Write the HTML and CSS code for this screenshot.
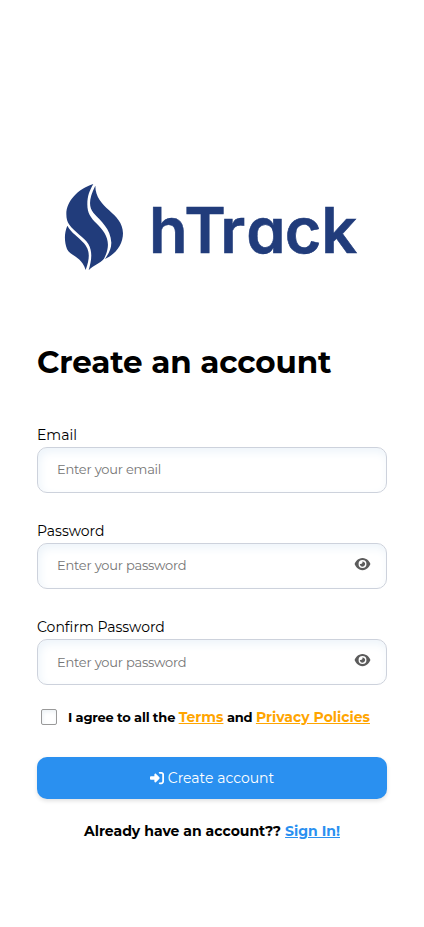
FILE: index.html
```
<!DOCTYPE html>
<html lang="en">
<head>
<meta charset="utf-8">
<meta name="viewport" content="width=device-width, initial-scale=1">
<title>hTrack - Create an account</title>
<link rel="stylesheet" href="styles.css">
</head>
<body>
<main class="page">
  <svg class="logo" viewBox="0 0 350 110" role="img" aria-label="hTrack">
    <g transform="translate(13 0) scale(.33333)">
      <path d="M130 42C83 57 49 94 49 132C49 146 52 155 57 163C74 187 103 203 115 222C129 246 124 274 116 301C130 285 149 281 162 266C187 218 169 190 139 160C122 143 112 130 112 103C112 77 119 61 130 42Z"/>
      <path d="M136 47C117 84 115 110 130 128C153 154 182 175 184 218C184 237 175 252 165 267C198 252 219 223 219 190C219 126 136 117 136 47Z"/>
      <path d="M52 167C42 190 43 216 51 237C62 259 94 258 107 300C124 253 115 237 102 220C84 198 65 191 52 167Z"/>
    </g>
    <text class="wordmark" x="112 147.2 183.2 209.2 247.7 284.3" y="82.6">hTrack</text>
  </svg>
  <h1 class="title">Create an account</h1>
  <form class="form">
    <div class="field">
      <label class="label" for="email">Email</label>
      <div class="control"><input class="input" id="email" type="email" placeholder="Enter your email"></div>
    </div>
    <div class="field">
      <label class="label" for="password">Password</label>
      <div class="control">
        <input class="input" id="password" type="password" placeholder="Enter your password">
        <svg class="eye" viewBox="0 0 576 512"><path d="M288 32c-81 0-146 37-193 80C48 156 17 208 2 244c-3 8-3 16 0 24 15 36 46 88 93 132 47 43 112 80 193 80s146-37 193-80c47-44 78-96 93-132 3-8 3-16 0-24-15-36-46-88-93-132-47-43-112-80-193-80zM144 256a144 144 0 1 1 288 0 144 144 0 1 1-288 0zm144-64c0 35-29 64-64 64-7 0-14-1-20-3-6-2-13 2-12 8 0 7 1 14 3 21 14 51 67 81 118 68s81-67 68-118c-11-42-49-69-89-71-6 0-10 6-8 12 2 6 4 12 4 19z"/></svg>
      </div>
    </div>
    <div class="field">
      <label class="label" for="confirm">Confirm Password</label>
      <div class="control">
        <input class="input input-confirm" id="confirm" type="password" placeholder="Enter your password">
        <svg class="eye" viewBox="0 0 576 512"><path d="M288 32c-81 0-146 37-193 80C48 156 17 208 2 244c-3 8-3 16 0 24 15 36 46 88 93 132 47 43 112 80 193 80s146-37 193-80c47-44 78-96 93-132 3-8 3-16 0-24-15-36-46-88-93-132-47-43-112-80-193-80zM144 256a144 144 0 1 1 288 0 144 144 0 1 1-288 0zm144-64c0 35-29 64-64 64-7 0-14-1-20-3-6-2-13 2-12 8 0 7 1 14 3 21 14 51 67 81 118 68s81-67 68-118c-11-42-49-69-89-71-6 0-10 6-8 12 2 6 4 12 4 19z"/></svg>
      </div>
    </div>
    <div class="agree">
      <input class="check" id="agree" type="checkbox">
      <label class="agree-text" for="agree">I agree to all the <a class="terms" href="#">Terms</a> and <a class="terms" href="#">Privacy Policies</a></label>
    </div>
    <button class="submit" type="button">
      <svg class="enter" viewBox="0 0 512 512"><path d="M352 96h64c18 0 32 14 32 32v256c0 18-14 32-32 32h-64c-18 0-32 14-32 32s14 32 32 32h64c53 0 96-43 96-96V128c0-53-43-96-96-96h-64c-18 0-32 14-32 32s14 32 32 32zm-9 183c13-13 13-33 0-46L215 105c-9-9-23-12-35-7s-20 17-20 30v64H32c-18 0-32 14-32 32v64c0 18 14 32 32 32h128v64c0 13 8 25 20 30s26 2 35-7z"/></svg>
      <span>Create account</span>
    </button>
  </form>
  <p class="signin">Already have an account?? <a class="signin-link" href="#">Sign In!</a></p>
</main>
</body>
</html>
```
FILE: styles.css
```
* { box-sizing: border-box; }

body {
  margin: 0;
  background: #fff;
  color: #000;
  font-family: Montserrat, Inter, sans-serif;
}

.page {
  min-height: 927px;
  padding: 170px 37px 0;
}

.logo {
  display: block;
  width: 350px;
  height: 110px;
  fill: #213c7b;
}

.wordmark {
  font-family: Inter, sans-serif;
  font-size: 63px;
  font-weight: 600;
  font-feature-settings: "cv11";
  stroke: #213c7b;
  stroke-width: .6px;
}

.title {
  margin: 62px 0 0;
  font-size: 31px;
  line-height: 40px;
  font-weight: 700;
  letter-spacing: -.12px;
  white-space: nowrap;
}

.form { margin-top: 44px; }

.field { height: 96px; }

.label {
  display: block;
  height: 21px;
  line-height: 18px;
  font-size: 14px;
}

.control { position: relative; height: 46px; }

.input {
  display: block;
  width: 100%;
  height: 46px;
  margin: 0;
  padding: 0 50px 2px 19px;
  border: 1px solid #cdd2dc;
  border-radius: 10px;
  background: #fff;
  box-shadow: inset 2px 4px 10px #edf4fa;
  font-family: inherit;
  font-size: 13px;
  letter-spacing: -.22px;
}

.input-confirm { padding-bottom: 0; }

.input::placeholder { color: #757575; opacity: 1; }

.eye {
  position: absolute;
  right: 16px;
  top: 14px;
  width: 17px;
  height: 14px;
  fill: #5c5c5c;
}

.agree {
  display: flex;
  align-items: center;
  height: 20px;
  margin-top: -7px;
}

.check {
  appearance: none;
  flex: none;
  width: 16px;
  height: 16px;
  margin: 0 11px 0 4px;
  border: 1px solid #999;
  border-radius: 2px;
  background: #fff;
  box-shadow: inset 1px 2px 4px #edf2f5;
}

.agree-text {
  font-size: 13px;
  font-weight: 700;
  line-height: 20px;
  letter-spacing: -.2px;
  white-space: nowrap;
}

.terms { color: #ffa500; font-size: 14px; letter-spacing: 0; }

.submit {
  display: flex;
  align-items: center;
  justify-content: center;
  gap: 4px;
  width: 100%;
  height: 42px;
  margin-top: 30px;
  padding: 0;
  border: 0;
  border-radius: 10px;
  background: #2a90f0;
  box-shadow: 0 2px 4px rgba(0, 0, 0, .12);
  color: #fff;
  font-family: inherit;
  font-size: 14px;
}

.enter { width: 14px; height: 14px; fill: #fff; }

.signin {
  margin: 22px 0 0;
  font-size: 14px;
  line-height: 20px;
  font-weight: 700;
  text-align: center;
  white-space: nowrap;
}

.signin-link { color: #2a90f0; }
```
